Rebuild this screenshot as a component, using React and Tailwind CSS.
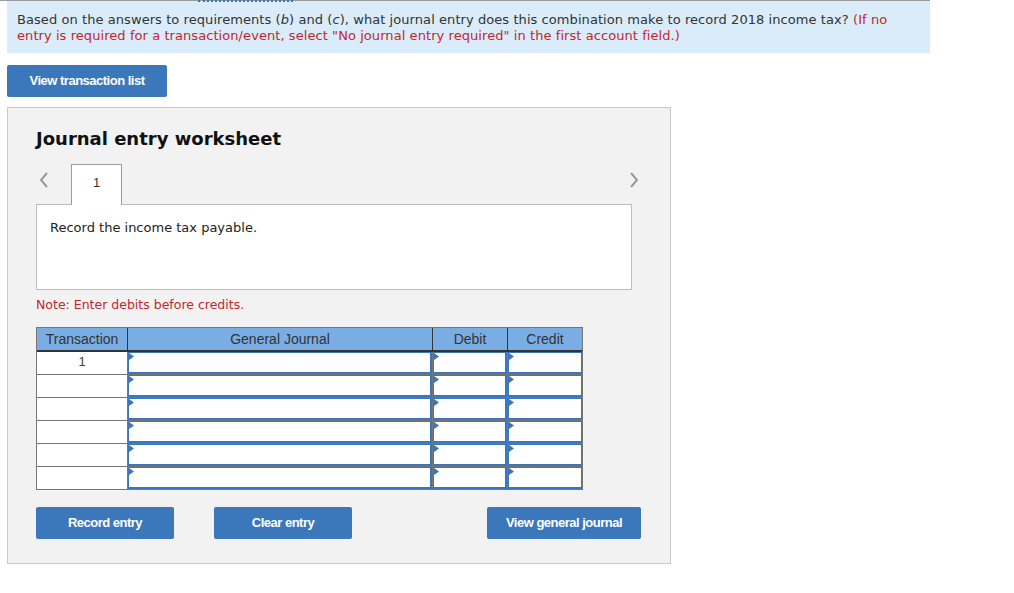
import React from "react";

const verdana = "font-['DejaVu_Sans',Verdana,sans-serif]";
const arial = "font-['Liberation_Sans',Arial,sans-serif]";
const narrow = "font-['Liberation_Sans_Narrow','Liberation_Sans',Arial,sans-serif]";

function InputCell({ last }) {
  return (
    <div className={`relative h-[22px] bg-white border border-[#3c76b8] border-b-2 ${last ? "" : "border-r-2"}`}>
      {/* small pointer marker */}
      <svg className="absolute left-0 top-0" width="6" height="7" viewBox="0 0 6 7">
        <polygon points="0,0 5,3.5 0,7" fill="#3c76b8" />
      </svg>
    </div>
  );
}

function Chevron({ dir }) {
  return (
    <svg width="10" height="16" viewBox="0 0 10 16">
      <polyline
        points={dir === "left" ? "8,1 2,8 8,15" : "2,1 8,8 2,15"}
        fill="none"
        stroke="#9a9a9a"
        strokeWidth="2"
      />
    </svg>
  );
}

export default function App() {
  const rows = [1, 2, 3, 4, 5, 6];
  const btn = `h-[32px] rounded-[2px] bg-[#3a77bb] text-white text-[13px] font-bold tracking-[-0.5px] ${narrow}`;

  return (
    <div className="relative w-[1014px] h-[593px] bg-white">
      {/* top rule */}
      <div className="relative w-[930px] h-px bg-[#999]">
        <div className="absolute left-[198px] top-0 w-[95px] h-[2px] border-t-2 border-dotted border-[#3c76b8]" />
      </div>

      {/* instruction banner */}
      <div className={`ml-[7px] w-[923px] h-[52px] bg-[#daecf9] pl-[10px] pr-[12px] pt-[11px] text-[13px] leading-[16px] tracking-[0.07px] text-[#333] ${verdana}`}>
        Based on the answers to requirements (<i>b</i>) and (<i>c</i>), what journal entry does this combination make to record 2018 income tax?{" "}
        <span className="text-[#c1272d]">
          (If no entry is required for a transaction/event, select "No journal entry required" in the first account field.)
        </span>
      </div>

      <button className={`ml-[7px] mt-[12px] w-[160px] ${btn}`}>
        View transaction list
      </button>

      {/* worksheet panel */}
      <div className="ml-[7px] mt-[10px] w-[664px] h-[457px] bg-[#f2f2f2] border border-[#c8c8c8] pl-[28px] pr-[38px]">
        <h2 className={`mt-[19px] text-[18px] font-bold text-[#111] leading-[24px] ${verdana}`}>
          Journal entry worksheet
        </h2>

        <div className="mt-[12px] flex items-end h-[41px]">
          <span className="w-[35px] pl-[3px] pb-[16px]">
            <Chevron dir="left" />
          </span>
          <div className={`relative z-10 w-[51px] h-[41px] -mb-px bg-white border border-b-0 border-[#9b9b9b] text-center pt-[8px] text-[13px] text-[#333] ${arial}`}>
            1
          </div>
          <span className="ml-auto -mr-[7px] pb-[16px]">
            <Chevron dir="right" />
          </span>
        </div>

        <div className={`w-[596px] h-[86px] bg-white border border-[#bdbdbd] px-[13px] pt-[13px] text-[13px] text-[#222] ${verdana}`}>
          Record the income tax payable.
        </div>

        <p className={`mt-[6px] text-[12.5px] text-[#c1272d] ${verdana}`}>Note: Enter debits before credits.</p>

        {/* journal table */}
        <div className={`mt-[12px] w-[547px] border border-[#767676] ${arial}`}>
          <div className="grid grid-cols-[91px_305px_75px_74px] h-[24px] bg-[#7aade3] border-b-2 border-[#333] text-[14px] text-[#333] leading-[22px] text-center">
            <div className="border-r border-[#333]">Transaction</div>
            <div className="border-r border-[#333]">General Journal</div>
            <div className="border-r border-[#333]">Debit</div>
            <div>Credit</div>
          </div>
          {rows.map((r, i) => (
            <div key={r} className={`grid grid-cols-[91px_305px_75px_74px] ${i < rows.length - 1 ? "border-b border-[#767676]" : ""}`}>
              <div className="h-[22px] bg-white border-r border-[#767676] text-center text-[13px] text-[#444] leading-[20px]">
                {r === 1 ? "1" : ""}
              </div>
              <div className="border-r border-[#767676]"><InputCell /></div>
              <div className="border-r border-[#767676]"><InputCell /></div>
              <div><InputCell last /></div>
            </div>
          ))}
        </div>

        <div className="mt-[17px] flex w-[605px]">
          <button className={`w-[138px] ${btn}`}>Record entry</button>
          <button className={`ml-[40px] w-[138px] ${btn}`}>Clear entry</button>
          <button className={`ml-auto w-[154px] ${btn}`}>View general journal</button>
        </div>
      </div>
    </div>
  );
}
